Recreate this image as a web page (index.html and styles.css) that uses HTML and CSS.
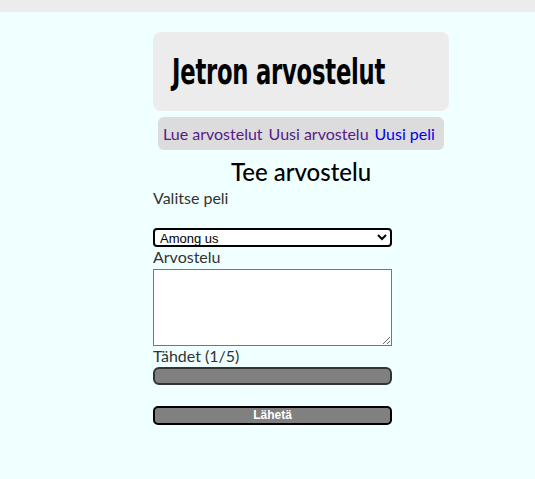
FILE: index.html
```html
<!DOCTYPE html>
<html lang="fi">
<head>
<meta charset="utf-8">
<title>Jetron arvostelut</title>
<link rel="stylesheet" href="styles.css">
</head>
<body>
<div class="topbar"></div>
<div class="page">
  <header class="hero">
    <h1 class="logo">Jetron arvostelut</h1>
  </header>
  <nav class="nav">
    <a class="nav-link visited" href="#lue">Lue arvostelut</a>
    <a class="nav-link visited" href="#uusi">Uusi arvostelu</a>
    <a class="nav-link" href="#peli">Uusi peli</a>
  </nav>
  <h2 class="form-title">Tee arvostelu</h2>
  <form class="review-form">
    <label class="label label-game" for="game">Valitse peli</label>
    <select class="select" id="game">
      <option>Among us</option>
    </select>
    <label class="label" for="review">Arvostelu</label>
    <textarea class="textarea" id="review"></textarea>
    <label class="label" for="stars">Tähdet (1/5)</label>
    <input class="range" id="stars" type="range" min="1" max="5" value="1">
    <button class="submit" type="button">Lähetä</button>
  </form>
</div>
</body>
</html>
```

FILE: styles.css
```css
html, body {
  margin: 0;
  padding: 0;
}
body {
  background: #f0ffff;
  font-family: Lato, "Noto Sans", sans-serif;
  color: #222;
  height: 479px;
  overflow: hidden;
}
.topbar {
  height: 12px;
  background: #ececec;
}
.page {
  padding-left: 153px;
  width: 296px;
}
.hero {
  margin-top: 20px;
  height: 79px;
  background: #ececec;
  border-radius: 8px;
  display: flex;
  align-items: center;
  padding-left: 19px;
}
.logo {
  margin: 0;
  font-family: "DejaVu Sans Condensed", "DejaVu Sans", sans-serif;
  font-weight: 700;
  font-size: 36px;
  color: #000;
  white-space: nowrap;
  transform: scaleX(0.7);
  transform-origin: left center;
  letter-spacing: -0.3px;
}
.nav {
  margin: 6px 5px 0;
  height: 33px;
  background: #dcdcdc;
  border-radius: 6px;
  display: flex;
  align-items: center;
  gap: 6px;
  padding-left: 5px;
  font-size: 16px;
}
.nav-link {
  color: #0000ee;
  text-decoration: none;
}
.nav-link.visited {
  color: #551a8b;
}
.form-title {
  margin: 8px 0 2px;
  text-align: center;
  font-size: 24px;
  line-height: 28px;
  font-weight: 500;
  color: #000;
}
.review-form {
  width: 239px;
  display: flex;
  flex-direction: column;
}
.label {
  font-size: 16px;
  line-height: 19px;
  color: #333;
}
.label-game {
  margin-bottom: 21px;
}
.select {
  height: 19px;
  border: 2px solid #000;
  border-radius: 4px;
  background: #fff;
  font-family: "Liberation Sans", Arial, sans-serif;
  font-size: 13px;
  padding: 0 0 0 1px;
  margin: 0;
}
.textarea {
  height: 77px;
  box-sizing: border-box;
  border: 1px solid #767676;
  margin: 3px 0 0;
  resize: vertical;
}
.range {
  -webkit-appearance: none;
  appearance: none;
  box-sizing: border-box;
  width: 239px;
  height: 18px;
  margin: 2px 0 0;
  background: #808080;
  border: 2px solid #333;
  border-radius: 6px;
}
.range::-webkit-slider-thumb {
  -webkit-appearance: none;
  width: 0;
  height: 0;
}
.submit {
  margin-top: 21px;
  height: 19px;
  box-sizing: border-box;
  background: #808080;
  border: 2px solid #000;
  border-radius: 5px;
  color: #fff;
  font-family: "Liberation Sans", Arial, sans-serif;
  font-weight: 700;
  font-size: 12px;
  padding: 0;
  line-height: 15px;
}
```
